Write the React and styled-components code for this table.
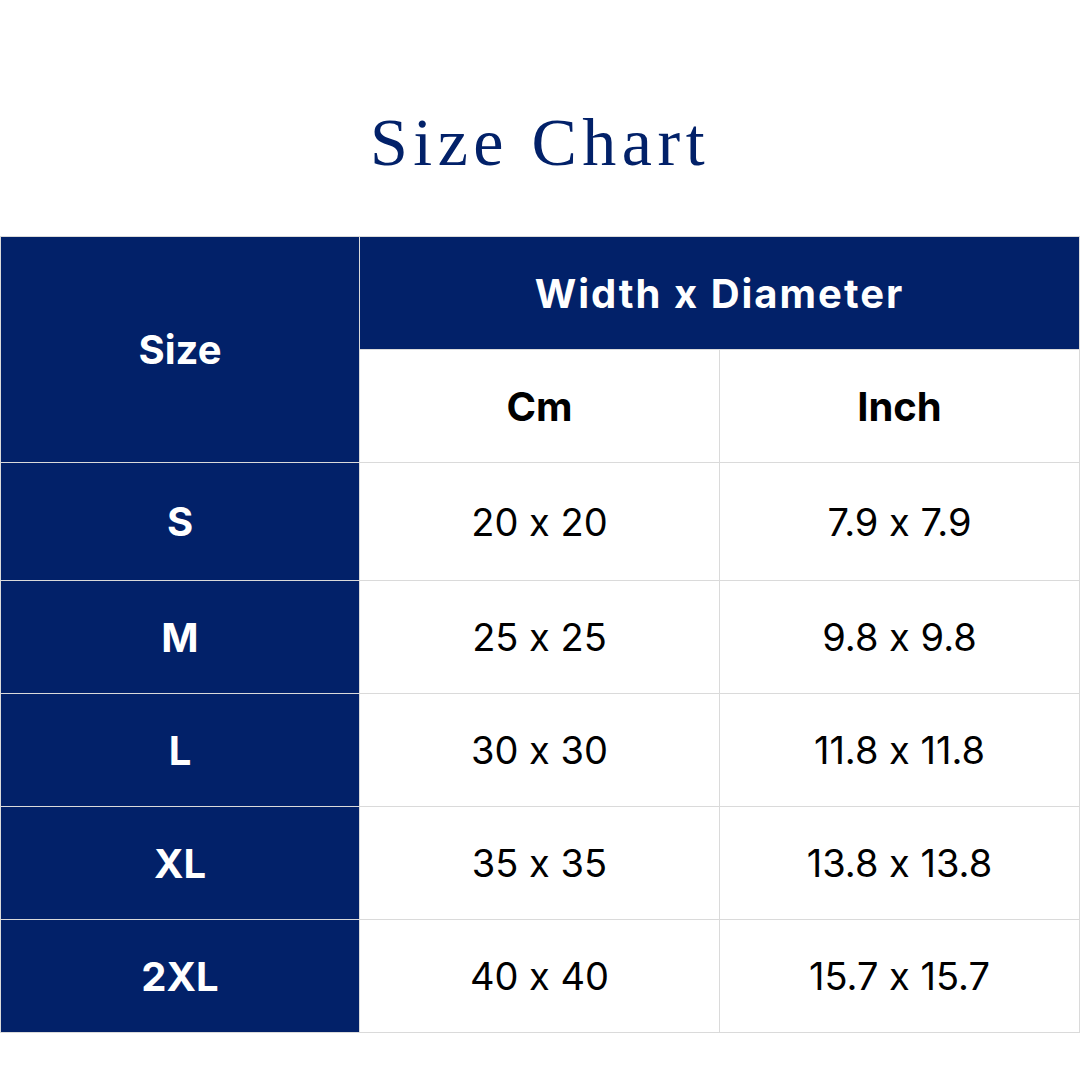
import styled, { createGlobalStyle } from "styled-components";

const GlobalStyle = createGlobalStyle`
  * { box-sizing: border-box; }
  html, body {
    margin: 0;
    padding: 0;
    background: #ffffff;
  }
`;

const NAVY = "#022169";
const LINE = "#dadada";

const rows = [
  { size: "S", cm: "20 x 20", inch: "7.9 x 7.9" },
  { size: "M", cm: "25 x 25", inch: "9.8 x 9.8" },
  { size: "L", cm: "30 x 30", inch: "11.8 x 11.8" },
  { size: "XL", cm: "35 x 35", inch: "13.8 x 13.8" },
  { size: "2XL", cm: "40 x 40", inch: "15.7 x 15.7" },
];

const App = () => {
  return (
    <Page>
      <GlobalStyle />
      <Title>Size Chart</Title>
      <Chart role="table">
        <Cell $dark $bold $rowSpan={2}>Size</Cell>
        <Cell $dark $bold $wide $colSpan={2}>Width x Diameter</Cell>
        <Cell $bold>Cm</Cell>
        <Cell $bold>Inch</Cell>
        {rows.map((r) => (
          <Row key={r.size} role="row">
            <Cell $dark $bold>{r.size}</Cell>
            <Cell>{r.cm}</Cell>
            <Cell>{r.inch}</Cell>
          </Row>
        ))}
      </Chart>
    </Page>
  );
};

const Page = styled.div`
  width: 1080px;
  height: 1080px;
  padding-top: 109px;
  background: #ffffff;
  overflow: hidden;
`;

const Title = styled.h1`
  margin: 0 0 61px;
  height: 66px;
  font-family: "Liberation Serif", "Times New Roman", serif;
  font-weight: 400;
  font-size: 68px;
  line-height: 66px;
  letter-spacing: 5.5px;
  text-align: center;
  color: ${NAVY};
`;

const Chart = styled.div`
  display: grid;
  grid-template-columns: 358px 359px 359px;
  grid-template-rows: 112px 112px 117px 112px 112px 112px 112px;
  gap: 1px;
  padding: 1px;
  width: 1080px;
  background: ${LINE};
  font-family: Inter, "Liberation Sans", sans-serif;
  font-feature-settings: "calt" 0;
`;

const Row = styled.div`
  display: contents;
`;

const Cell = styled.div`
  display: flex;
  align-items: center;
  justify-content: center;
  grid-row: ${(p) => (p.$rowSpan ? `span ${p.$rowSpan}` : "auto")};
  grid-column: ${(p) => (p.$colSpan ? `span ${p.$colSpan}` : "auto")};
  background: ${(p) => (p.$dark ? NAVY : "#ffffff")};
  color: ${(p) => (p.$dark ? "#ffffff" : "#000000")};
  font-size: ${(p) => (p.$bold ? "40px" : "38px")};
  font-weight: ${(p) => (p.$bold ? 700 : 400)};
  letter-spacing: ${(p) => (p.$wide ? "2px" : "0")};
`;

export default App;
